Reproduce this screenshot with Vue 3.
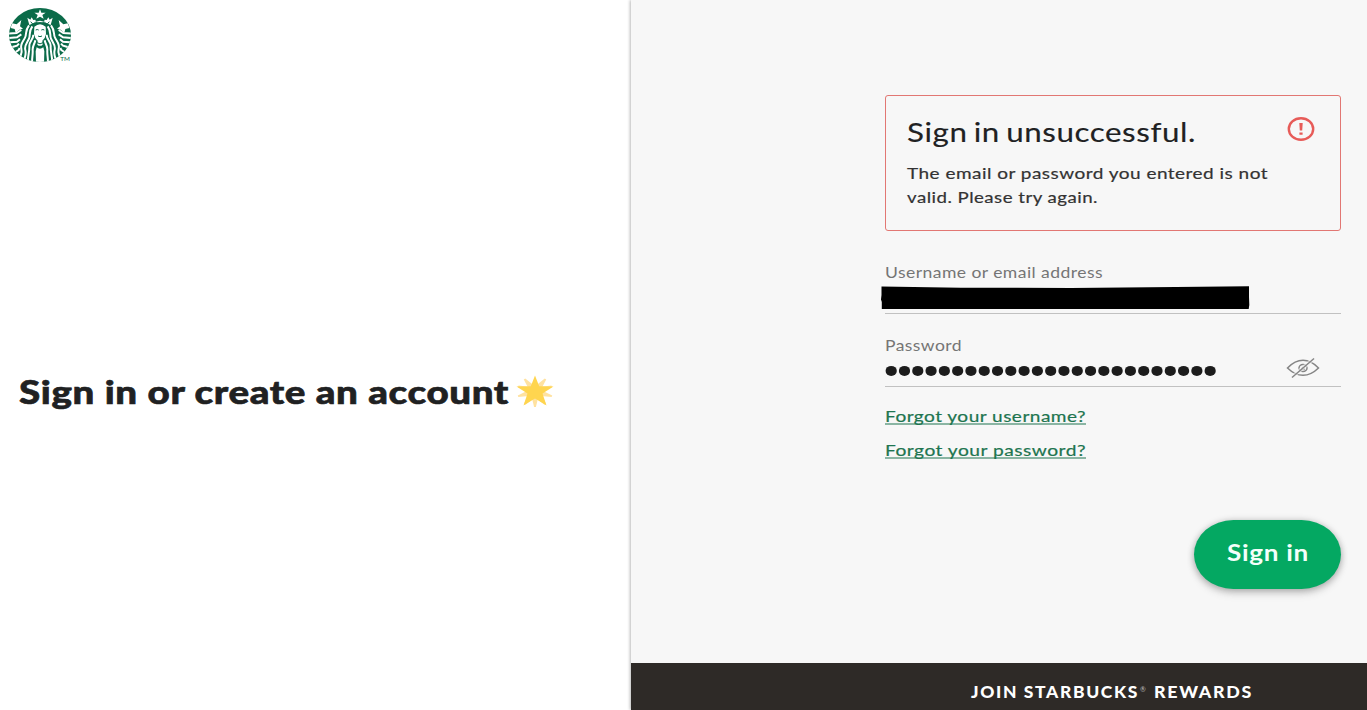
<script setup>
const dots = Array.from({ length: 25 }, (_, i) => 6.2 + i * 13.29)
const rays = [36, 70, 108, 145, 180, 215, 252, 290, 324]
</script>

<template>
  <main class="page">
    <section class="intro">
      <svg class="logo" viewBox="0 0 240 210" aria-label="Starbucks">
        <defs>
          <clipPath id="seal"><ellipse cx="120" cy="105" rx="93" ry="81" /></clipPath>
        </defs>
        <g clip-path="url(#seal)">
          <rect x="20" y="20" width="200" height="170" fill="#0b6b49" />
          <g fill="#fff">
            <path d="M120 28l4 10h13l-10 7 4 11-11-6-11 6 4-11-10-7h13z" />
            <path d="M82 53l9 6 4-7 5 8 6-1 2 6 12-3 12 3 2-6 6 1 5-8 4 7 9-6-6 22-13-6-19-3-19 3-13 6z" />
            <path d="M36 70l14 3 14-13-4 19 9 7-11 3-11 10-3-12-12-3z" />
            <path d="M204 70l-14 3-14-13 4 19-9 7 11 3 11 10 3-12 12-3z" />
            <path d="M103 80q17-15 34 0l1 22q-2 13-11 20l1 12q-8 7-16 0l1-12q-9-7-11-20z" />
            <path d="M110 142q10 8 20 0l3 12-1 38h-24l-1-38z" />
          </g>
          <g fill="none" stroke="#fff" stroke-width="6">
            <path d="M97 79c-12 16-5 25-10 37s-15 20-11 34-3 20-5 42" />
            <path d="M87 76c-13 17-6 25-12 37s-15 20-11 33-3 18-6 34" />
            <path d="M100 104c0 16-13 20-12 35s-4 24-5 50" />
            <path d="M106 121c-3 14-9 17-8 29s-2 20-2 40" />
            <path d="M143 79c12 16 5 25 10 37s15 20 11 34 3 20 5 42" />
            <path d="M153 76c13 17 6 25 12 37s15 20 11 33 3 18 6 34" />
            <path d="M140 104c0 16 13 20 12 35s4 24 5 50" />
            <path d="M134 121c3 14 9 17 8 29s2 20 2 40" />
            <path d="M23 101l27-2 14-9M26 114l25-2 13-9M30 127l21-2 9-7M37 141l14-4 6-6M47 156l9-6 3-6" />
            <path d="M217 101l-27-2-14-9M214 114l-25-2-13-9M210 127l-21-2-9-7M203 141l-14-4-6-6M193 156l-9-6-3-6" />
          </g>
          <g fill="none" stroke="#0b6b49" stroke-width="3">
            <path d="M92 65l7 8 7-6 14 4 14-4 7 6 7-8" />
            <path d="M107 90q5-3 9 0M124 90q5-3 9 0M114 108q6 4 12 0M111 128q9 7 18 0" />
          </g>
        </g>
        <text x="181" y="184" textLength="29" lengthAdjust="spacingAndGlyphs" font-size="15" fill="#0b6b49">TM</text>
      </svg>
      <h1 class="headline">
        <svg width="493" height="46"><text x="0" y="31" textLength="490" lengthAdjust="spacingAndGlyphs" font-size="31.5" font-weight="900" fill="#202122" stroke="#202122" stroke-width=".6" letter-spacing=".5">Sign in or create an account</text></svg>
        <svg class="star" width="42" height="46" viewBox="0 0 42 46">
          <g transform="translate(23 18.5) scale(1.15 1)" fill="#ffe2a0">
            <path v-for="r in rays" :key="r" d="M-4 0L-.8 -15.5H.8L4 0z" :transform="`rotate(${r})`" />
          </g>
          <path d="M23 2.500l4.200 10.800 14.300.2-11 6.900 4 12.200-11.500-7.200-11.500 7.200 4-12.200-11-6.900 14.300-.2z" fill="#ffd54f" />
        </svg>
      </h1>
    </section>

    <section class="account">
      <form class="form" @submit.prevent>
        <div class="alert">
          <svg class="alert-title" width="290" height="36"><text x="0" y="24" textLength="289" lengthAdjust="spacingAndGlyphs" font-size="26.5" letter-spacing=".5" word-spacing="-2" fill="#202122" stroke="#202122" stroke-width=".15">Sign in unsuccessful.</text></svg>
          <svg class="alert-text" width="370" height="50" fill="#333" stroke="#333" stroke-width=".2" letter-spacing=".4">
            <text x="0" y="18" textLength="361" lengthAdjust="spacingAndGlyphs" font-size="16">The email or password you entered is not</text>
            <text x="0" y="42" textLength="191" lengthAdjust="spacingAndGlyphs" font-size="16">valid. Please try again.</text>
          </svg>
          <svg class="warning" width="28" height="26" viewBox="0 0 28 26">
            <ellipse cx="14" cy="13" rx="12.2" ry="10.7" fill="none" stroke="#e75b58" stroke-width="2.4" />
            <path d="M12.3 7h3.400l-.5 7.500h-2.400zM12.400 16.400h3.200v2.300h-3.200z" fill="#e75b58" />
          </svg>
        </div>

        <div class="field username">
          <svg width="220" height="24"><text x="0" y="18" textLength="218" lengthAdjust="spacingAndGlyphs" font-size="16" letter-spacing=".4" fill="#757575">Username or email address</text></svg>
          <svg class="redaction" width="370" height="24" viewBox="0 0 370 24"><path d="M.5.5L80 1.700 190 2l105-1 73-.8V11l.3 8-.6 4H.8v-7L0 13.500.5 9z" /></svg>
        </div>
        <div class="field password">
          <svg width="100" height="24"><text x="0" y="18" textLength="77" lengthAdjust="spacingAndGlyphs" font-size="16" letter-spacing=".4" fill="#757575">Password</text></svg>
          <div class="password-row">
            <svg width="340" height="16"><ellipse v-for="x in dots" :key="x" :cx="x" cy="8.9" rx="5.6" ry="5" fill="#1c1c1c" /></svg>
            <svg class="eye" width="34" height="22" viewBox="0 0 34 22" fill="none" stroke="#858585" stroke-width="1.5">
              <path d="M1.500 11Q9 3.300 17 3.300T32.500 11Q25 18.300 17 18.300T1.500 11z" />
              <ellipse cx="17" cy="11" rx="4" ry="3.5" />
              <path d="M15.200 11.500q1.700-2.500 3-.200t-2 .600" stroke-width="1" />
              <path d="M5.500 20.500L28 1.500" stroke="#f7f7f7" stroke-width="4" opacity=".6" />
              <path d="M6 20.500L28 1.500" />
            </svg>
          </div>
        </div>

        <a class="link"><svg width="202" height="34"><text x="0" y="19.2" textLength="201" lengthAdjust="spacingAndGlyphs" font-size="16" letter-spacing=".4">Forgot your username?</text><path d="M0 21h201" /></svg></a>
        <a class="link"><svg width="202" height="34"><text x="0" y="19.2" textLength="201" lengthAdjust="spacingAndGlyphs" font-size="16" letter-spacing=".4">Forgot your password?</text><path d="M0 21h201" /></svg></a>

        <button class="submit" type="submit">
          <svg width="82" height="34"><text x="0" y="23" textLength="82" lengthAdjust="spacingAndGlyphs" font-size="22" letter-spacing=".6" font-weight="700" fill="#f4fffa">Sign in</text></svg>
        </button>
      </form>

      <footer class="rewards">
        <svg width="282" height="24" fill="#fff" font-weight="900" font-size="16">
          <text x="0" y="17" textLength="168" lengthAdjust="spacingAndGlyphs" letter-spacing="1.5">JOIN STARBUCKS</text>
          <text x="169" y="11" font-size="7" font-weight="400" fill="#bbb">®</text>
          <text x="183" y="17" textLength="99" lengthAdjust="spacingAndGlyphs" letter-spacing="1.5">REWARDS</text>
        </svg>
      </footer>
    </section>
  </main>
</template>

<style>
body { overflow: hidden; }
</style>

<style scoped>
.page {
  display: flex;
  width: 1367px;
  height: 710px;
  background: #fff;
  font-family: Lato, "Open Sans", sans-serif;
}
svg { display: block; flex: none; overflow: visible; }
.intro { width: 631px; flex: none; }
.logo { width: 80px; height: 70px; }
.headline { display: flex; margin: 302.5px 0 0 19px; }
.account {
  display: flex;
  flex-direction: column;
  flex: 1;
  background: #f7f7f7;
  box-shadow: -1px 0 3px rgba(0, 0, 0, .28);
}
.form {
  display: flex;
  flex-direction: column;
  align-items: flex-start;
  box-sizing: border-box;
  width: 456px;
  height: 663px;
  margin-left: 254px;
  padding-top: 95px;
}
.alert {
  display: grid;
  grid-template-columns: 380px 28px;
  grid-template-rows: 43px 50px;
  box-sizing: border-box;
  width: 456px;
  height: 136px;
  padding: 22px 0 0 21px;
  border: 1px solid #e27773;
  border-radius: 3px;
}
.alert-title { grid-area: 1 / 1; }
.alert-text { grid-area: 2 / 1; }
.warning { grid-area: 1 / 2; margin-top: -2px; }
.field {
  box-sizing: border-box;
  width: 456px;
  border-bottom: 1px solid #c1c1c1;
}
.username { height: 54px; margin-top: 29px; }
.redaction { margin: 2px 0 0 -4px; }
.password { height: 54px; margin-top: 19px; }
.password-row {
  display: flex;
  align-items: center;
  justify-content: space-between;
  padding-right: 21px;
}
.password-row svg:first-child { margin-top: 4px; }
.link { display: block; color: #1e7550; }
.password + .link { margin-top: 16px; }
.link svg { fill: currentColor; stroke: currentColor; stroke-width: .2; }
.link path { stroke-width: 1.2; }
.submit {
  display: flex;
  align-items: center;
  justify-content: center;
  align-self: flex-end;
  width: 147px;
  height: 69px;
  margin-top: 49px;
  padding: 0;
  border: 0;
  border-radius: 40px / 35px;
  background: #04a862;
  box-shadow: 0 1px 7px rgba(0, 0, 0, .28), 0 5px 8px rgba(0, 0, 0, .12);
  font-family: inherit;
}
.rewards {
  flex: 1;
  box-sizing: border-box;
  padding: 18px 0 0 340px;
  background: #2e2a27;
}
</style>
